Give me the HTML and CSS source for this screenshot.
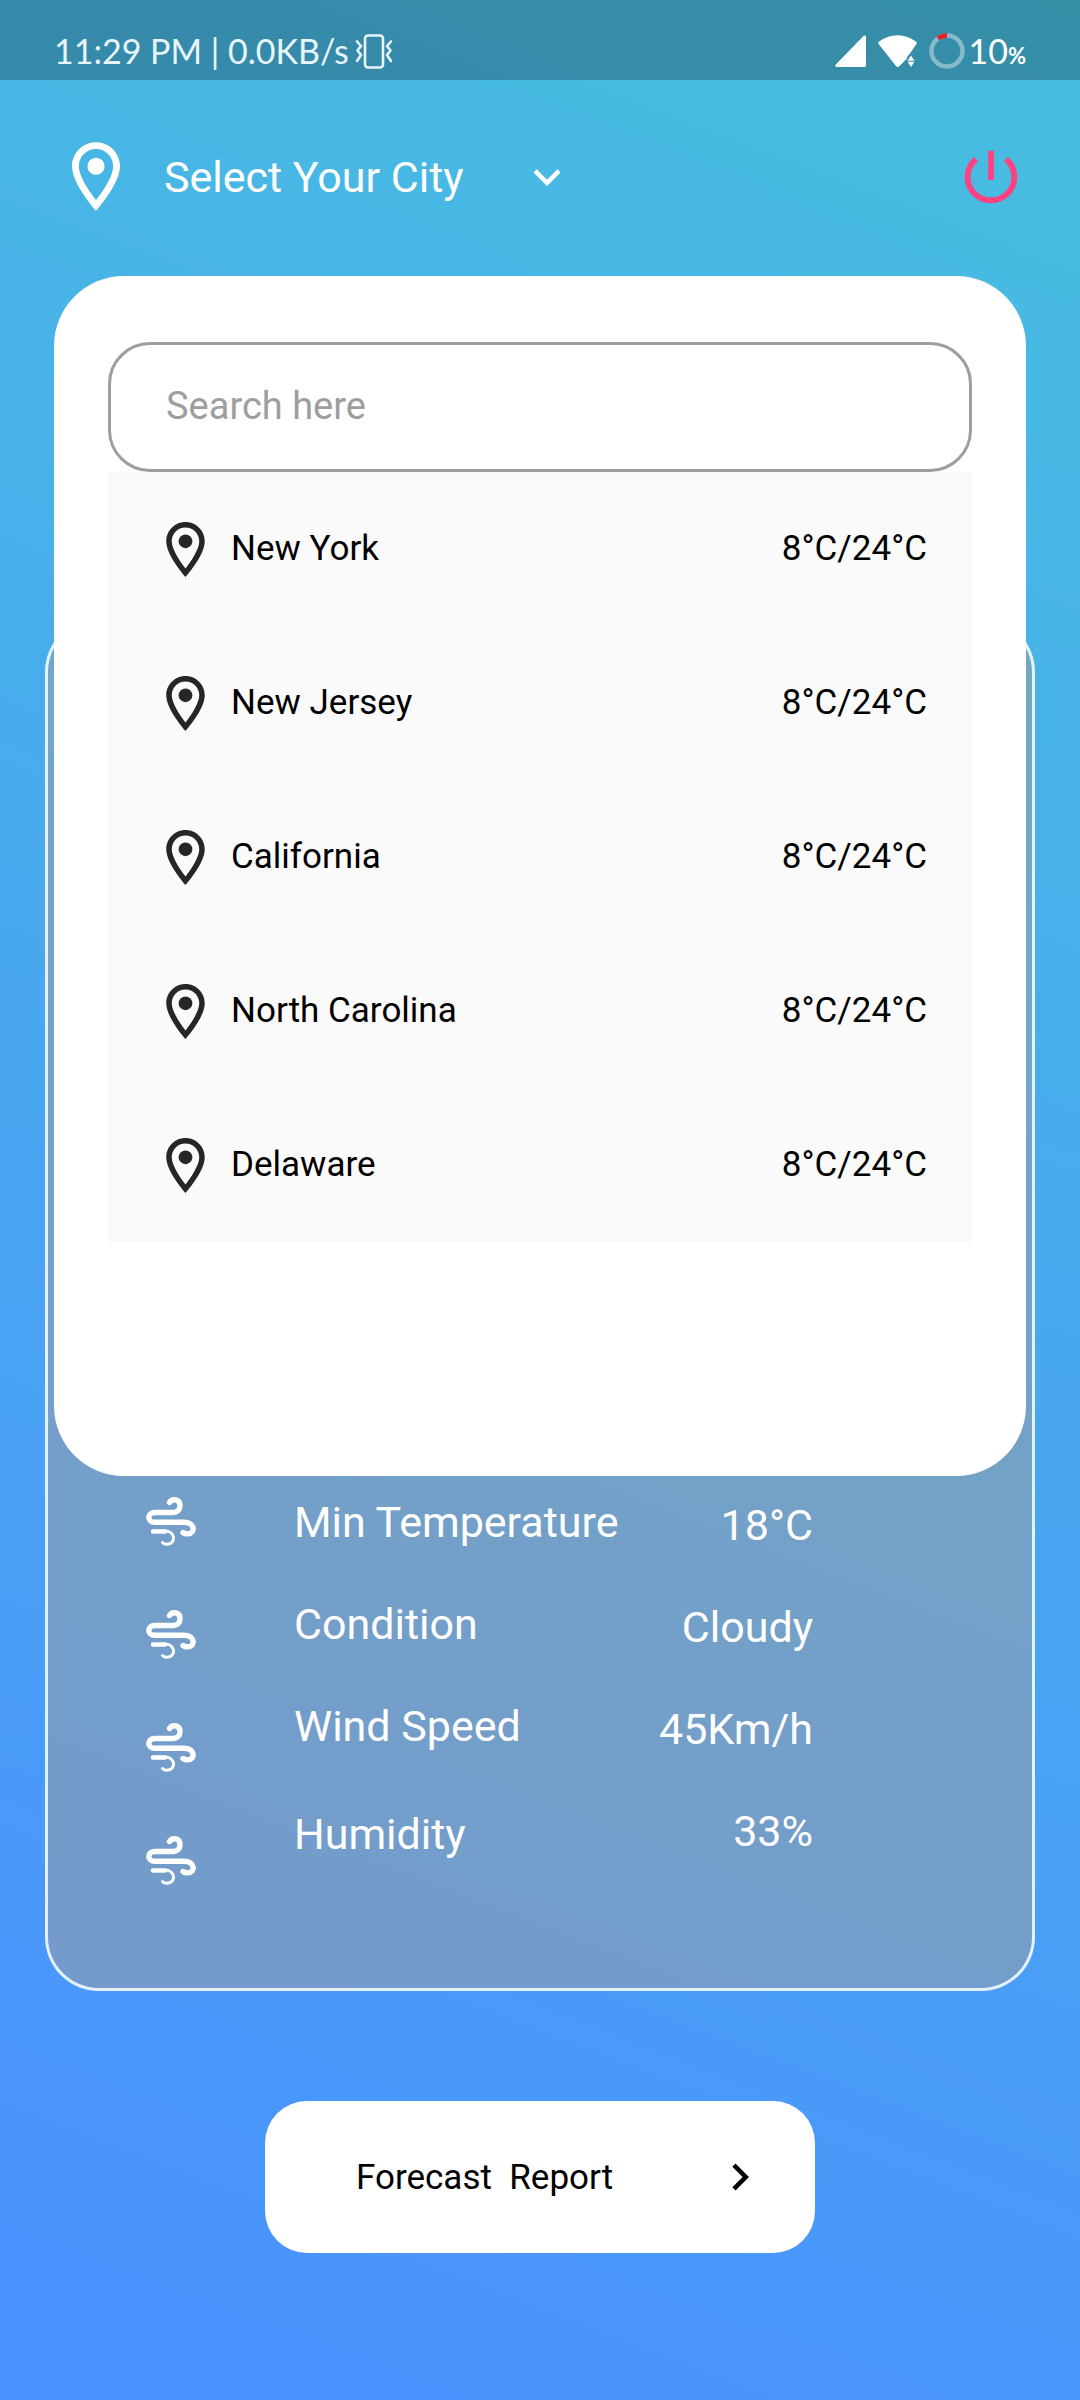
FILE: index.html
```html
<!DOCTYPE html>
<html lang="en">
<head>
<meta charset="utf-8">
<meta name="viewport" content="width=device-width, initial-scale=1">
<title>Weather</title>
<link rel="stylesheet" href="styles.css">
</head>
<body>
<svg class="sprite" aria-hidden="true">
  <symbol id="pin" viewBox="5 2 14 20">
    <path d="M12 2C8.13 2 5 5.13 5 9c0 5.25 7 13 7 13s7-7.75 7-13c0-3.87-3.13-7-7-7zM7 9c0-2.76 2.24-5 5-5s5 2.24 5 5c0 2.88-2.88 7.19-5 9.88C9.92 16.21 7 11.85 7 9z"/>
    <circle cx="12" cy="9" r="2.5"/>
  </symbol>
  <symbol id="wind" viewBox="0 0 50 49">
    <g fill="none" stroke="currentColor" stroke-linecap="round">
      <path stroke-width="5.4" d="M23.500 5.500C26.500 1 34 2 34 8.800C34 13 31 15.500 27 15.500H9C.7 15.500 .7 25.300 9 25.300H38C49 25.300 50 36.500 41.500 36.800Q39 37 37 35.500"/>
      <path stroke-width="4.400" d="M7 34.500H19"/>
      <path stroke-width="3" d="M18 34C30 33.500 30.500 47.200 21 47.200Q18 47.200 16.500 45.500"/>
    </g>
  </symbol>
</svg>

<div class="status">
  <div class="status-left">
    <span>11:29 PM | 0.0KB/s</span>
    <svg class="vibrate" viewBox="0 0 38 35" aria-hidden="true">
      <g fill="none" stroke="currentColor" stroke-width="2.600" stroke-linecap="round" stroke-linejoin="round">
        <rect x="10" y="1.500" width="18" height="32" rx="3"/>
        <path d="M2 7.500l4 4.500-3.500 4.500L6 21l-4 6M36 7.500L32 12l3.500 4.500L32 21l4 6"/>
      </g>
    </svg>
  </div>
  <div class="status-right">
    <svg class="signal" viewBox="0 0 31 32" aria-hidden="true"><path fill="currentColor" d="M29 .5Q31 0 31 2V30.500Q31 32 29.500 32H1.500Q-.5 31.500 .8 29.500Z"/></svg>
    <svg class="wifi" viewBox="0 0 39 32" aria-hidden="true"><path fill="currentColor" d="M1 6.500Q19.500-6 38 6.500Q39.500 8 38 9.500L32 18.500Q29 21 28.500 24L21 31.500Q19.500 33 18 31L1 9.500Q-.5 8 1 6.500ZM33 20.500l3.500 5.200h-7zM33 32l3.500-5.200h-7z"/></svg>
    <div class="charge">
      <svg class="battery" viewBox="0 0 36 36" aria-hidden="true">
        <circle cx="18" cy="18" r="15.500" fill="none" stroke="#fff" stroke-opacity=".4" stroke-width="4.500"/>
        <path d="M9 5.400A15.500 15.500 0 0 1 18 2.500" fill="none" stroke="#f01f1f" stroke-width="4.500"/>
      </svg>
      <span>10<span class="percent">%</span></span>
    </div>
  </div>
</div>

<header class="header">
  <button class="city" type="button" aria-haspopup="dialog" aria-expanded="true" aria-controls="city-panel">
    <svg class="city-pin" aria-hidden="true"><use href="#pin"/></svg>
    <span class="city-name">Select Your City</span>
    <svg class="chevron" viewBox="0 0 24 24" aria-hidden="true"><path d="M16.590 8.590L12 13.170 7.410 8.590 6 10l6 6 6-6z"/></svg>
  </button>
  <button class="power" type="button" aria-label="Sign out">
    <svg viewBox="0 0 24 24" aria-hidden="true"><path d="M13 3h-2v10h2V3zm4.830 2.170l-1.420 1.420C17.990 7.860 19 9.810 19 12c0 3.870-3.130 7-7 7s-7-3.130-7-7c0-2.190 1.010-4.140 2.580-5.420L6.170 5.170C4.230 6.820 3 9.260 3 12c0 4.970 4.030 9 9 9s9-4.030 9-9c0-2.740-1.230-5.180-3.170-6.830z"/></svg>
  </button>
</header>

<main class="main">
  <section class="weather">
    <ul class="icons" aria-hidden="true">
      <li><svg><use href="#wind"/></svg></li>
      <li><svg><use href="#wind"/></svg></li>
      <li><svg><use href="#wind"/></svg></li>
      <li><svg><use href="#wind"/></svg></li>
    </ul>
    <ul class="labels">
      <li>Min Temperature</li>
      <li>Condition</li>
      <li>Wind Speed</li>
      <li class="label-last">Humidity</li>
    </ul>
    <ul class="values">
      <li>18°C</li>
      <li>Cloudy</li>
      <li>45Km/h</li>
      <li>33%</li>
    </ul>
  </section>

  <button class="forecast" type="button">
    <span>Forecast  Report</span>
    <svg class="chevron" viewBox="0 0 24 24" aria-hidden="true"><path d="M10 6L8.590 7.410 13.170 12l-4.580 4.590L10 18l6-6z"/></svg>
  </button>

  <section class="panel" id="city-panel" role="dialog" aria-label="Select Your City">
    <input class="search" type="search" placeholder="Search here" aria-label="Search here">
    <ul class="cities">
      <li><button class="row" type="button"><svg class="row-pin" aria-hidden="true"><use href="#pin"/></svg><span>New York</span><span class="temp">8°C/24°C</span></button></li>
      <li><button class="row" type="button"><svg class="row-pin" aria-hidden="true"><use href="#pin"/></svg><span>New Jersey</span><span class="temp">8°C/24°C</span></button></li>
      <li><button class="row" type="button"><svg class="row-pin" aria-hidden="true"><use href="#pin"/></svg><span>California</span><span class="temp">8°C/24°C</span></button></li>
      <li><button class="row" type="button"><svg class="row-pin" aria-hidden="true"><use href="#pin"/></svg><span>North Carolina</span><span class="temp">8°C/24°C</span></button></li>
      <li><button class="row" type="button"><svg class="row-pin" aria-hidden="true"><use href="#pin"/></svg><span>Delaware</span><span class="temp">8°C/24°C</span></button></li>
    </ul>
  </section>
</main>
</body>
</html>
```
FILE: styles.css
```css
* {
  box-sizing: border-box;
}

body {
  margin: 0;
  min-height: 100vh;
  font-family: Roboto, sans-serif;
  color: #fff;
  background: linear-gradient(201deg, #47bfdf 0%, #4a91ff 98%);
}

button {
  padding: 0;
  border: 0;
  background: none;
  color: inherit;
  font: inherit;
  text-align: left;
}

ul {
  margin: 0;
  padding: 0;
  list-style: none;
}

svg {
  display: block;
  flex: none;
  fill: currentColor;
}

.sprite {
  position: absolute;
  width: 0;
  height: 0;
}

/* Status bar */
.status {
  display: flex;
  justify-content: space-between;
  height: 80px;
  padding: 22px 54px 0;
  background: rgba(0, 0, 0, 0.25);
  color: #e8f6fc;
  font-family: Lato, sans-serif;
  font-size: 34px;
  line-height: 58px;
}

.status-left,
.status-right,
.charge {
  display: flex;
  align-items: center;
  height: 58px;
}

.status-left {
  gap: 6px;
}

.status-right {
  gap: 12px;
  color: #fff;
}

.charge {
  gap: 4px;
}

.vibrate {
  width: 38px;
  height: 35px;
}

.signal {
  width: 31px;
  height: 32px;
}

.wifi {
  width: 39px;
  height: 32px;
}

.battery {
  width: 36px;
  height: 36px;
}

.percent {
  font-size: 22px;
  font-weight: 700;
  line-height: 1;
}

/* Header */
.header {
  display: flex;
  align-items: center;
  justify-content: space-between;
  height: 196px;
  padding: 0 54px 3px 72px;
}

.city {
  display: flex;
  align-items: center;
  font-size: 43px;
  line-height: 50px;
}

.city-pin {
  width: 48px;
  height: 69px;
}

.city-name {
  margin: 0 56px 0 44px;
}

.chevron {
  width: 54px;
  height: 54px;
}

.power {
  color: #ff4081;
}

.power svg {
  width: 70px;
  height: 70px;
}

/* Weather card */
.main {
  position: relative;
  padding: 342px 45px 0;
}

.weather {
  display: flex;
  align-items: flex-start;
  padding: 876px 219px 103px 98px;
  border: 3px solid rgba(255, 255, 255, 0.85);
  border-radius: 54px;
  background: rgba(158, 158, 158, 0.5);
  background-clip: padding-box;
  font-size: 43px;
  line-height: 50px;
}

.icons {
  display: grid;
  gap: 64px;
}

.icons svg {
  width: 50px;
  height: 49px;
}

.labels,
.values {
  display: grid;
  gap: 52px;
}

.labels {
  margin-left: 98px;
}

.label-last {
  padding-top: 6px;
}

.values {
  margin-left: auto;
  padding-top: 3px;
  text-align: right;
}

.forecast {
  display: flex;
  align-items: center;
  justify-content: space-between;
  width: 550px;
  height: 152px;
  margin: 110px auto 0;
  padding: 0 48px 0 91px;
  border-radius: 42px;
  background: #fff;
  color: #000;
  font-size: 35px;
  white-space: pre;
}

/* City picker, over the weather card */
.panel {
  position: absolute;
  top: 0;
  left: 54px;
  right: 54px;
  padding: 66px 54px 234px;
  border-radius: 70px;
  background: #fff;
  color: #000;
  font-size: 35px;
  line-height: 42px;
}

.search {
  display: block;
  width: 100%;
  height: 130px;
  padding: 0 55px 2px;
  border: 3px solid #9e9e9e;
  border-radius: 42px;
  background: #fff;
  color: #000;
  font: inherit;
  font-size: 38px;
  appearance: none;
}

.search::placeholder {
  color: #9e9e9e;
  opacity: 1;
}

.cities {
  background: #fafafa;
}

.row {
  display: flex;
  align-items: center;
  width: 100%;
  height: 154px;
  padding: 0 45px 0 58px;
}

.row-pin {
  width: 39px;
  height: 55px;
  margin-right: 26px;
  color: #262626;
}

.temp {
  margin-left: auto;
}
```
